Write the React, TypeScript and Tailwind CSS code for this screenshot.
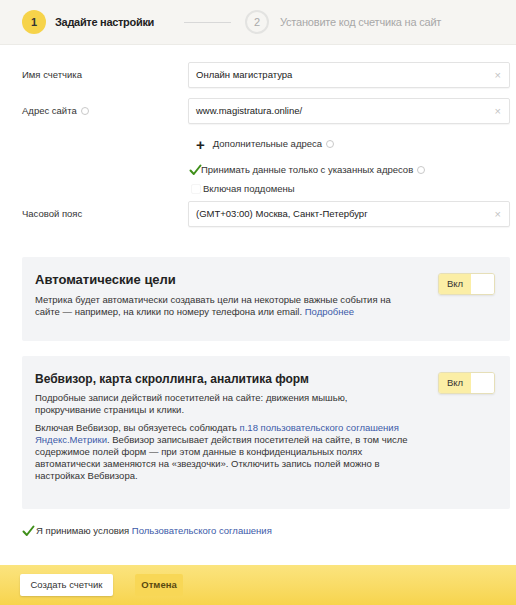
import React from "react";

const font = { fontFamily: '"Liberation Sans", Arial, sans-serif' };

function Info() {
  return (
    <span className="inline-block w-[8px] h-[8px] rounded-full border border-[#c9c9c9] ml-[4px] align-[-1px]" />
  );
}

function Check() {
  return (
    <svg width="13" height="12" viewBox="0 0 13 12" className="shrink-0">
      <path d="M1.5 6.5 L4.8 10 L11.5 1.5" fill="none" stroke="#3f8f1a" strokeWidth="2" strokeLinecap="round" strokeLinejoin="round" />
    </svg>
  );
}

function Field({ value }: { value: string }) {
  return (
    <div className="flex-1 h-[26px] border border-[#e3e3e3] rounded-[2px] bg-white flex items-center justify-between pl-[7px] pr-[8px] shadow-[0_1px_1px_rgba(0,0,0,0.04)]">
      <span className="text-[9.5px] text-[#222]">{value}</span>
      <span className="text-[11px] text-[#c4c4c4] leading-none">×</span>
    </div>
  );
}

function Toggle() {
  return (
    <div className="flex h-[22px] w-[57px] rounded-[3px] border border-[#e6dfb8] overflow-hidden shadow-[0_1px_2px_rgba(0,0,0,0.08)]">
      <div className="w-[32px] bg-[#fbeea6] flex items-center justify-center text-[9.5px] text-[#333]">Вкл</div>
      <div className="flex-1 bg-white" />
    </div>
  );
}

export default function App() {
  return (
    <div className="w-[516px] h-[605px] bg-white flex flex-col overflow-hidden" style={font}>
      {/* Steps */}
      <div className="h-[45px] bg-[#f6f5f2] border-b border-[#ecebe7] flex items-center pl-[22px] shrink-0">
        <div className="w-[24px] h-[24px] rounded-full bg-[#f6d34a] flex items-center justify-center text-[11px] font-bold text-[#333]">1</div>
        <span className="ml-[9px] w-[119px] text-[11px] tracking-[-0.3px] font-bold text-[#222] whitespace-nowrap">Задайте настройки</span>
        <div className="ml-[10px] w-[47px] h-px bg-[#d8d8d8]" />
        <div className="ml-[14px] w-[24px] h-[24px] rounded-full border-2 border-[#e3e3e1] flex items-center justify-center text-[11px] text-[#aaa]">2</div>
        <span className="ml-[11px] text-[11px] tracking-[-0.2px] text-[#a8a8a8]">Установите код счетчика на сайт</span>
      </div>

      {/* Form */}
      <div className="flex flex-col pl-[22px] pr-[6px] pt-[17px]">
        <div className="flex items-center">
          <div className="w-[166px] text-[9.5px] text-[#333]">Имя счетчика</div>
          <Field value="Онлайн магистратура" />
        </div>
        <div className="flex items-center mt-[10px]">
          <div className="w-[166px] text-[9.5px] text-[#333]">Адрес сайта<Info /></div>
          <Field value="www.magistratura.online/" />
        </div>
        <div className="flex items-center ml-[166px] mt-[13px] h-[14px]">
          <span className="ml-[8px] text-[15px] leading-none font-bold text-[#222]">+</span>
          <span className="ml-[8px] text-[9.5px] text-[#333]">Дополнительные адреса<Info /></span>
        </div>
        <div className="flex items-center ml-[166px] mt-[12px] h-[14px]">
          <span className="ml-[1px]"><Check /></span>
          <span className="ml-[-1px] text-[9.5px] text-[#333]">Принимать данные только с указанных адресов<Info /></span>
        </div>
        <div className="flex items-center ml-[166px] mt-[5px] h-[14px]">
          <span className="ml-[3px] w-[10px] h-[10px] border border-[#f5f5f5] rounded-[2px]" />
          <span className="ml-[2px] text-[9.5px] text-[#333]">Включая поддомены</span>
        </div>
        <div className="flex items-center mt-[5px]">
          <div className="w-[166px] text-[9.5px] text-[#333]">Часовой пояс</div>
          <Field value="(GMT+03:00) Москва, Санкт-Петербург" />
        </div>

        {/* Card 1 */}
        <div className="mt-[30px] bg-[#f3f4f6] rounded-[2px] h-[84px] px-[13px] pt-[15px] flex">
          <div className="flex-1">
            <div className="text-[13px] font-bold text-[#222] leading-[16px]">Автоматические цели</div>
            <p className="mt-[6px] text-[9.5px] leading-[12px] text-[#333] w-[360px]">
              Метрика будет автоматически создавать цели на некоторые важные события на сайте — например, на клики по номеру телефона или email. <a className="text-[#3b5aa8]">Подробнее</a>
            </p>
          </div>
          <div className="pt-[1px] pr-[2px]"><Toggle /></div>
        </div>

        {/* Card 2 */}
        <div className="mt-[15px] bg-[#f3f4f6] rounded-[2px] h-[153px] px-[13px] pt-[15px] flex">
          <div className="flex-1">
            <div className="text-[12px] font-bold text-[#222] leading-[16px]">Вебвизор, карта скроллинга, аналитика форм</div>
            <p className="mt-[5px] text-[9.5px] leading-[12px] text-[#333] w-[320px]">
              Подробные записи действий посетителей на сайте: движения мышью, прокручивание страницы и клики.
            </p>
            <p className="mt-[6px] text-[9.5px] leading-[12px] text-[#333] w-[380px]">
              Включая Вебвизор, вы обязуетесь соблюдать <a className="text-[#3b5aa8]">п.18 пользовательского соглашения Яндекс.Метрики</a>. Вебвизор записывает действия посетителей на сайте, в том числе содержимое полей форм — при этом данные в конфиденциальных полях автоматически заменяются на «звездочки». Отключить запись полей можно в настройках Вебвизора.
            </p>
          </div>
          <div className="pt-[1px] pr-[2px]"><Toggle /></div>
        </div>

        <div className="flex items-center mt-[15px] h-[14px]">
          <Check />
          <span className="ml-[1px] text-[9.5px] text-[#333]">
            Я принимаю условия <a className="text-[#3b5aa8]">Пользовательского соглашения</a>
          </span>
        </div>
      </div>

      {/* Footer */}
      <div className="mt-auto h-[40px] bg-gradient-to-b from-[#fbe47e] to-[#f7d44c] flex items-center pl-[20px] gap-[22px] shrink-0">
        <div className="h-[22px] w-[93px] bg-white rounded-[2px] shadow-[0_1px_2px_rgba(0,0,0,0.15)] flex items-center justify-center text-[9.5px] text-[#333]">Создать счетчик</div>
        <div className="h-[22px] w-[48px] rounded-[2px] bg-[#f8d756] flex items-center justify-center text-[9.5px] font-bold text-[#5a4a10]">Отмена</div>
      </div>
    </div>
  );
}
